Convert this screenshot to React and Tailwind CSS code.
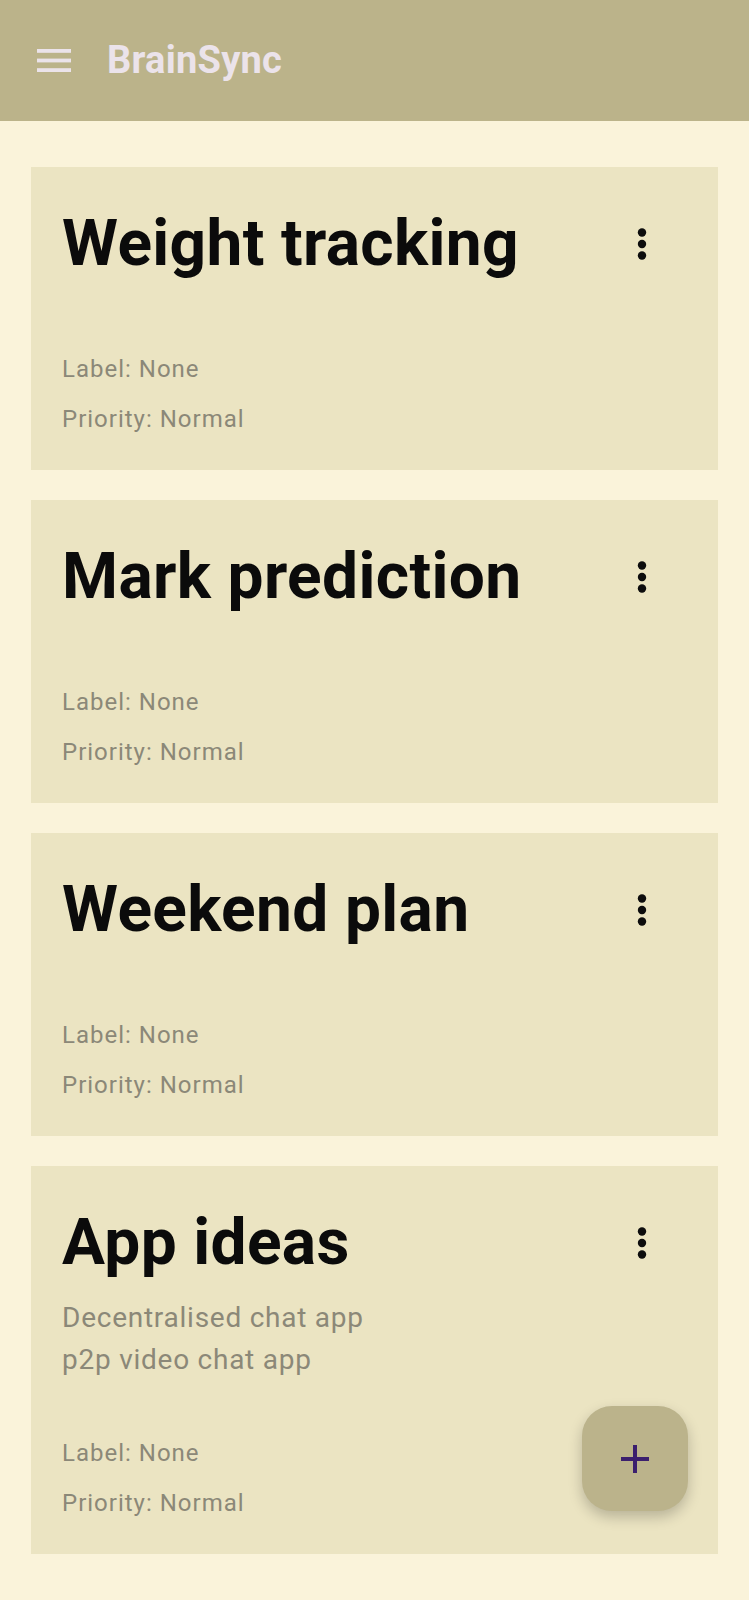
import React from "react";

const notes = [
  { title: "Weight tracking", body: [] },
  { title: "Mark prediction", body: [] },
  { title: "Weekend plan", body: [] },
  { title: "App ideas", body: ["Decentralised chat app", "p2p video chat app"] },
];

function Dots() {
  return (
    <svg width="12" height="34" viewBox="0 0 12 34" className="mr-[39px] shrink-0">
      <circle cx="6" cy="5.5" r="4.2" fill="#0d0d0d" />
      <circle cx="6" cy="17" r="4.2" fill="#0d0d0d" />
      <circle cx="6" cy="28.5" r="4.2" fill="#0d0d0d" />
    </svg>
  );
}

function Card({ note }) {
  const hasBody = note.body.length > 0;
  return (
    <div className="bg-[#ebe4c2] px-[31px] pt-[38px] pb-[26px]">
      <div className="flex items-center justify-between">
        <h2 className="text-[64px] leading-[77px] font-bold tracking-[0.35px] text-[#0b0b0b]">{note.title}</h2>
        <Dots />
      </div>
      {hasBody ? (
        <div className="mt-[16px] text-[28px] leading-[42px] tracking-[0.75px] text-[#8b8878]">
          {note.body.map((l) => (
            <div key={l}>{l}</div>
          ))}
        </div>
      ) : null}
      <div
        className={
          (hasBody ? "mt-[47px]" : "mt-[62px]") +
          " text-[24px] leading-[50px] tracking-[1px] text-[#8b8878]"
        }
      >
        <div>Label: None</div>
        <div>Priority: Normal</div>
      </div>
    </div>
  );
}

export default function App() {
  return (
    <div
      className="relative min-h-[1600px] bg-[#faf3da]"
      style={{ fontFamily: "Roboto, 'Noto Sans', sans-serif" }}
    >
      <header className="flex h-[121px] items-center bg-[#bbb38a] pl-[37px]">
        <svg width="34" height="23" viewBox="0 0 34 23">
          <rect x="0" y="0" width="34" height="3.8" fill="#ebe3ea" />
          <rect x="0" y="9.6" width="34" height="3.8" fill="#ebe3ea" />
          <rect x="0" y="19.2" width="34" height="3.8" fill="#ebe3ea" />
        </svg>
        <h1 className="ml-[36px] text-[38px] font-bold tracking-[0.25px] text-[#ebe3ea]">BrainSync</h1>
      </header>
      <main className="flex flex-col gap-[30px] px-[31px] pt-[46px]">
        {notes.map((n) => (
          <Card key={n.title} note={n} />
        ))}
      </main>
      <button className="absolute left-[582px] top-[1406px] flex h-[105px] w-[106px] items-center justify-center rounded-[30px] bg-[#bbb38b] shadow-[0_6px_14px_rgba(0,0,0,0.22)]">
        <svg width="28" height="28" viewBox="0 0 28 28">
          <rect x="0" y="12" width="28" height="4" fill="#3b1f6e" />
          <rect x="12" y="0" width="4" height="28" fill="#3b1f6e" />
        </svg>
      </button>
    </div>
  );
}
